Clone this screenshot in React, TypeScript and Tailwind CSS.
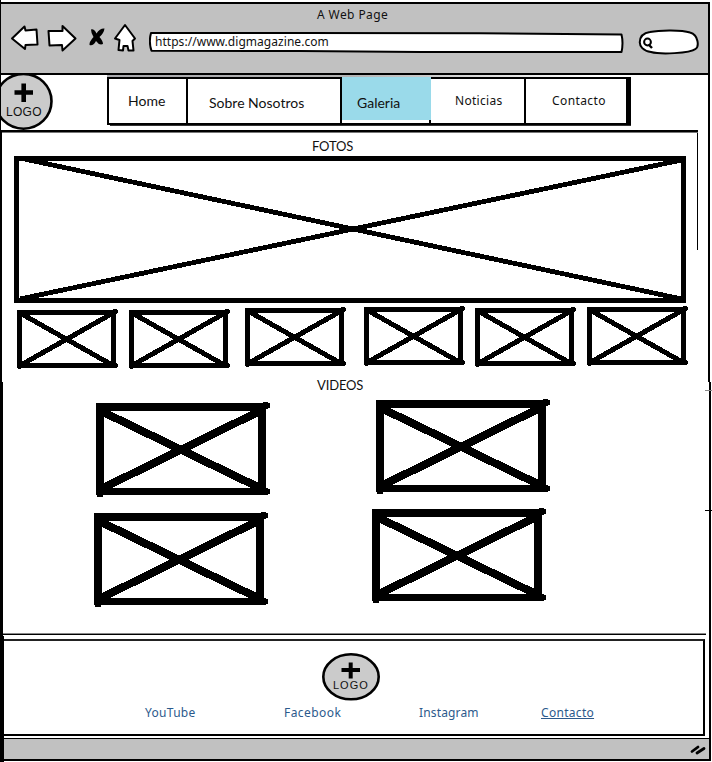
import React from "react";

type PhotoProps = { className: string };

/** Small crossed box standing in for a photo thumbnail. */
function Thumb({ className }: PhotoProps) {
  return (
    <svg className={"block h-[60px] w-[101px] shrink-0 " + className} viewBox="0 0 101 60" shapeRendering="crispEdges" fill="none" stroke="#000">
      <path d="M0 3.5H97M2.5 1V59M96.5 2V58M0 56.5H99" strokeWidth="5" />
      <path d="M3 4L97 57M97 3.5L3 56.5" strokeWidth="5" />
      <path d="M96 0h4v1h1v3h-1v1h-4zM98 54h2v1h1v3h-1v1h-2zM1 58h3v2h-3z" fill="#000" stroke="none" />
    </svg>
  );
}

/** Larger crossed box standing in for a video. */
function Video({ className }: PhotoProps) {
  return (
    <svg className={"block h-[95px] w-[174px] shrink-0 " + className} viewBox="0 0 174 95" shapeRendering="crispEdges" fill="none" stroke="#000">
      <path d="M0 5H168M4 1V93M166 3V92" strokeWidth="8" />
      <path d="M0 89.5H171" strokeWidth="7" />
      <path d="M6 9.5L166 87M166 8L6 86.5" strokeWidth="8" />
      <path d="M167 0h5v1h2v5h-2v1h-5zM169 86h3v1h2v5h-2v1h-3zM1 92h6v3h-6z" fill="#000" stroke="none" />
    </svg>
  );
}

function Toolbar() {
  return (
    <svg className="block h-[34px] w-[130px]" viewBox="8 22 130 34" fill="#fff" stroke="#000" strokeWidth="2" strokeLinejoin="round" strokeLinecap="round">
      <path d="M12 38.5L24.5 26.5L25.5 30.5L36.5 29.5L37.5 44.5L25.5 45L25 49Z" />
      <path d="M48.5 31L62.5 31L62.5 26L75.5 38.5L62.5 50.5L62 45L49.5 45.5Z" />
      <path d="M115 38.5L125 25L135 38.5L132.5 41L133.5 50.5L128.5 50.5L127.5 46L123.5 46L123 50.5L118.5 50L119.5 40Z" />
      <path d="M91 29.5Q94 28.5 96.5 33.5Q100 28 104.5 28.5Q104 33 99.5 37Q103 41 103 44Q99 45.5 96 41Q93 46.5 89.5 45Q89 42 93.5 37Q91 33 91 29.5Z" fill="#000" stroke="none" />
    </svg>
  );
}

function NavItem({ label, className }: { label: string; className: string }) {
  return <a className={"block h-full shrink-0 whitespace-nowrap text-[#111] " + className}>{label}</a>;
}

export default function App() {
  return (
    <div className="relative flex h-[762px] w-[712px] flex-col overflow-hidden bg-white font-['Lato','Liberation_Sans',sans-serif] text-[#111]">
      {/* browser chrome */}
      <header className="h-[75px] shrink-0 border-l border-black pt-[2px]">
        <div className="mr-[2px] h-[73px] border-y-2 border-r-2 border-black bg-[#c1c1c1]">
          <div className="h-[18px] pl-[316px] pt-[3px] font-['Noto_Sans'] text-[12px] leading-[16px] tracking-[0.4px]">A Web Page</div>
          <div className="flex items-start pl-[7px]">
            <Toolbar />
            <div className="relative ml-[11px] mt-[9px] h-[22px] w-[475px]">
              <svg className="absolute inset-0 h-[22px] w-[475px]" viewBox="149 31 475 22" fill="#fff" stroke="#000" strokeWidth="2" strokeLinejoin="round">
                <path d="M151 33L300 33L480 33.2L621.5 34.5Q623.5 43 621.5 52L420 52L300 51L151.5 50.8Q148.5 42 151 33Z" />
              </svg>
              <div className="relative pl-[6px] pt-[2px] font-['Noto_Sans'] text-[12px] leading-[18px] tracking-[0.04px]">https://www.digmagazine.com</div>
            </div>
            <svg className="ml-[14px] mt-[6px] h-[27px] w-[61px]" viewBox="638 28 61 27" fill="#fff" stroke="#000" strokeWidth="2">
              <path d="M650 32C660 29.8 682 29.8 690 32.5C699 35 699 47 695.5 49C690 53.5 660 54.5 651 52C643 51 639.5 46 639.8 42C640 37 643 33 650 32Z" />
              <circle cx="647.5" cy="42" r="3.4" />
              <path d="M649 45L652 48" strokeWidth="2.4" />
            </svg>
          </div>
        </div>
      </header>

      {/* main navigation */}
      <div className="mr-[2px] flex h-[55px] shrink-0 border-l border-r-2 border-black">
        <div className="relative -mt-[2px] h-[57px] w-[52px]">
          <svg className="absolute inset-0 h-[57px] w-[52px]" viewBox="1 73 52 57">
            <ellipse cx="23.5" cy="101.3" rx="28" ry="27.4" fill="#cbcbcb" stroke="#000" strokeWidth="2.6" />
            <path d="M14.5 92.5H33M23.7 83.5V102" stroke="#000" strokeWidth="4.6" />
          </svg>
          <div className="relative pl-[5px] pt-[31px] font-['Liberation_Sans'] text-[12px] leading-[16px] tracking-[0.3px]">LOGO</div>
        </div>
        <div className="ml-[54px] w-[524px]">
          <div className="h-[2px] w-[490px] bg-linear-to-r from-[#a9a9ad] via-[#b4b4b4] to-white" />
          <nav className="flex h-[48px] border-2 border-r-[5px] border-black text-[14px]">
            <NavItem label="Home" className="w-[77px] pl-[19px] pt-[12px] leading-[20px]" />
            <NavItem label="Sobre Nosotros" className="w-[154px] border-l-2 border-black pl-[21px] pt-[14px] leading-[20px]" />
            <div className="-mt-[2px] h-[46px] w-[91px] shrink-0 border-l-2 border-black">
              <NavItem label="Galeria" className="h-[43px]! bg-[#9adaea] pl-[15px] pt-[16px] leading-[20px]" />
              <div className="ml-auto h-[3px] w-[2px] bg-black" />
            </div>
            <NavItem label="Noticias" className="w-[93px] pl-[24px] pt-[12px] font-['Noto_Sans'] text-[12px] leading-[20px] tracking-[0.3px]" />
            <NavItem label="Contacto" className="grow border-l-2 border-black pl-[26px] pt-[12px] font-['Noto_Sans'] text-[12px] leading-[20px] tracking-[0.4px]" />
          </nav>
          <div className="ml-[3px] h-px w-[521px] bg-[#333]" />
        </div>
      </div>

      {/* photos */}
      <section className="mr-[2px] flex h-[252px] shrink-0 border-l-2 border-r-2 border-black">
        <div className="w-[696px]">
          <div className="h-[3px] border-b border-t-2 border-b-[#777] border-t-black" />
          <div className="h-[117px] border-r border-black pl-[310px] pt-[4px]">
            <h2 className="h-[19px] text-[13px] leading-[18px] tracking-[-0.15px]">FOTOS</h2>
            <svg className="-ml-[298px] block h-[147px] w-[672px] overflow-visible" viewBox="14 156 672 147" shapeRendering="crispEdges" fill="none" stroke="#000">
              <rect x="16.5" y="158.5" width="667" height="142" strokeWidth="5" />
              <path d="M22 158.5L684 299.5M684 159.5L20 299" strokeWidth="4.8" />
            </svg>
          </div>
          <div className="mt-[57px] flex h-[62px] items-start pl-[15px]">
            <Thumb className="mt-[2px]" />
            <Thumb className="ml-[11px] mt-[2px]" />
            <Thumb className="ml-[15px]" />
            <Thumb className="ml-[18px] -mt-px" />
            <Thumb className="ml-[10px]" />
            <Thumb className="ml-[11px] -mt-px" />
          </div>
        </div>
      </section>

      {/* videos */}
      <section className="mr-[1px] h-[254px] shrink-0 border-l-[3px] border-r-2 border-black">
        <h2 className="h-[17px] pl-[314px] text-[13px] leading-[7px] tracking-[-0.15px]">VIDEOS</h2>
        <div className="flex h-[110px] pl-[93px]">
          <Video className="mt-[3px]" />
          <Video className="ml-[106px]" />
        </div>
        <div className="flex h-[124px] pl-[91px]">
          <Video className="mt-[3px]" />
          <Video className="ml-[104px] -mt-px" />
        </div>
        <div className="h-[2px] w-[703px] border-b border-t border-b-black border-t-[#888]" />
      </section>

      {/* footer */}
      <footer className="mr-[1px] h-[126px] shrink-0 border-l-4 border-black">
        <div className="h-[125px] border-b-2 border-r-2 border-black pt-[3px]">
          <div className="mr-[4px] h-[97px] border-b-2 border-r-2 border-t-2 border-b-black border-r-black border-t-[#222]">
            <div className="relative ml-[318px] mt-[12px] h-[48px] w-[58px]">
              <svg className="absolute inset-0 h-[48px] w-[58px]" viewBox="322 652.5 58 48">
                <ellipse cx="351" cy="676.3" rx="27.7" ry="22.5" fill="#cbcbcb" stroke="#000" strokeWidth="2.6" />
                <path d="M341.5 669.5H360M350.7 662V678" stroke="#000" strokeWidth="4" />
              </svg>
              <div className="relative pl-[11px] pt-[26px] font-['Liberation_Sans'] text-[11px] leading-[13px] tracking-[1px]">LOGO</div>
            </div>
            <div className="flex pl-[141px] pt-[3px] font-['Noto_Sans'] text-[12px] leading-[18px] text-[#2c5a8c]">
              <a className="w-[139px] tracking-[0.3px]">YouTube</a>
              <a className="w-[135px] tracking-[0.45px]">Facebook</a>
              <a className="w-[122px] tracking-[0.15px]">Instagram</a>
              <a className="tracking-[0.3px] underline">Contacto</a>
            </div>
          </div>
          <div className="mt-[2px] h-[21px] border-t border-black bg-[#c1c1c1] pt-[5px]">
            <svg className="ml-auto mr-[2px] block h-[12px] w-[18px]" viewBox="0 0 18 12" stroke="#000" strokeWidth="2.8" strokeLinecap="round">
              <path d="M3 7.5L9 3M8 9L15 4.5" />
            </svg>
          </div>
        </div>
      </footer>

      {/* stray pen ticks over the window's right edge */}
      <div className="absolute left-[705px] top-[390px] h-px w-[7px] bg-[#888]" />
      <div className="absolute left-[705px] top-[510px] h-px w-[7px] bg-black" />
    </div>
  );
}
